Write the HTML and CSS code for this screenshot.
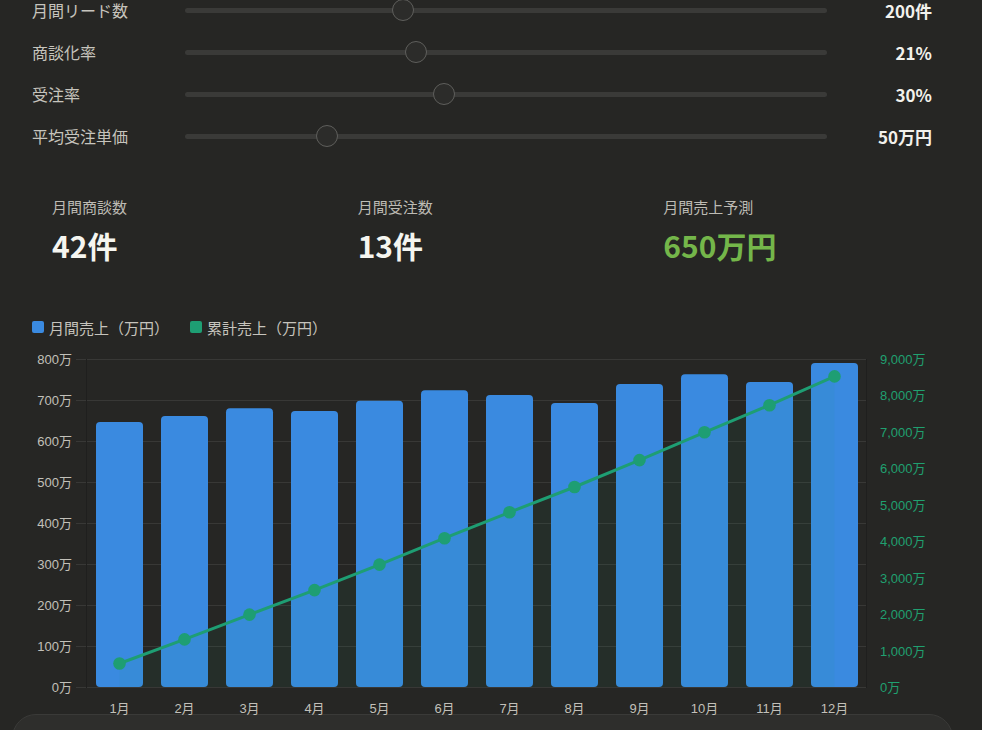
FILE: index.html
```html
<!DOCTYPE html>
<html lang="ja">
<head>
<meta charset="utf-8">
<title>売上シミュレーション</title>
<link rel="stylesheet" href="styles.css">
</head>
<body>
<main class="page">
  <section class="sliders">
    <div class="slider-row">
      <span class="slider-label">月間リード数</span>
      <input class="slider" type="range" min="0" max="600" value="200">
      <span class="slider-value">200件</span>
    </div>
    <div class="slider-row">
      <span class="slider-label">商談化率</span>
      <input class="slider" type="range" min="5" max="50" value="21">
      <span class="slider-value">21%</span>
    </div>
    <div class="slider-row">
      <span class="slider-label">受注率</span>
      <input class="slider" type="range" min="10" max="60" value="30">
      <span class="slider-value">30%</span>
    </div>
    <div class="slider-row">
      <span class="slider-label">平均受注単価</span>
      <input class="slider" type="range" min="10" max="200" value="50">
      <span class="slider-value">50万円</span>
    </div>
  </section>

  <section class="stats">
    <div class="stat">
      <div class="stat-label">月間商談数</div>
      <div class="stat-value">42件</div>
    </div>
    <div class="stat">
      <div class="stat-label">月間受注数</div>
      <div class="stat-value">13件</div>
    </div>
    <div class="stat">
      <div class="stat-label">月間売上予測</div>
      <div class="stat-value stat-value--green">650万円</div>
    </div>
  </section>

  <section class="chart">
    <div class="legend">
      <span class="legend-item"><span class="swatch swatch--blue"></span>月間売上（万円）</span>
      <span class="legend-item"><span class="swatch swatch--green"></span>累計売上（万円）</span>
    </div>
    <svg class="chart-svg" width="901" height="369" viewBox="32 345 901 369" xmlns="http://www.w3.org/2000/svg">
      <g class="grid" stroke="#383836" stroke-width="1">
        <line x1="76" y1="359.5" x2="867" y2="359.5"/>
        <line x1="76" y1="400.5" x2="867" y2="400.5"/>
        <line x1="76" y1="441.5" x2="867" y2="441.5"/>
        <line x1="76" y1="482.5" x2="867" y2="482.5"/>
        <line x1="76" y1="523.5" x2="867" y2="523.5"/>
        <line x1="76" y1="564.5" x2="867" y2="564.5"/>
        <line x1="76" y1="605.5" x2="867" y2="605.5"/>
        <line x1="76" y1="646.5" x2="867" y2="646.5"/>
        <line x1="76" y1="687.5" x2="867" y2="687.5"/>
      </g>
      <line x1="86.5" y1="359" x2="86.5" y2="688" stroke="#1f1f1e" stroke-width="1"/>
      <line x1="866.5" y1="359" x2="866.5" y2="688" stroke="#1f1f1e" stroke-width="1"/>

      <g class="bars" fill="#3a8ae0">
        <rect x="96" y="422.1" width="47" height="264.9" rx="4"/>
        <rect x="161" y="416" width="47" height="271" rx="4"/>
        <rect x="226" y="408.2" width="47" height="278.8" rx="4"/>
        <rect x="291" y="411.1" width="47" height="275.9" rx="4"/>
        <rect x="356" y="400.8" width="47" height="286.2" rx="4"/>
        <rect x="421" y="390.2" width="47" height="296.8" rx="4"/>
        <rect x="486" y="395.1" width="47" height="291.9" rx="4"/>
        <rect x="551" y="402.9" width="47" height="284.1" rx="4"/>
        <rect x="616" y="384" width="47" height="303" rx="4"/>
        <rect x="681" y="374.2" width="47" height="312.8" rx="4"/>
        <rect x="746" y="382" width="47" height="305" rx="4"/>
        <rect x="811" y="363.1" width="47" height="323.9" rx="4"/>
      </g>

      <polygon fill="rgba(30,158,114,0.07)" points="119.5,687 119.5,663.5 184.5,639.4 249.5,614.6 314.5,590.1 379.5,564.6 444.5,538.2 509.5,512.3 574.5,487 639.5,460.1 704.5,432.3 769.5,405.2 834.5,376.4 834.5,687"/>
      <polyline fill="none" stroke="#1e9e73" stroke-width="3" stroke-linejoin="round" points="119.5,663.5 184.5,639.4 249.5,614.6 314.5,590.1 379.5,564.6 444.5,538.2 509.5,512.3 574.5,487 639.5,460.1 704.5,432.3 769.5,405.2 834.5,376.4"/>
      <g fill="#1e9e73">
        <circle cx="119.5" cy="663.5" r="6.3"/>
        <circle cx="184.5" cy="639.4" r="6.3"/>
        <circle cx="249.5" cy="614.6" r="6.3"/>
        <circle cx="314.5" cy="590.1" r="6.3"/>
        <circle cx="379.5" cy="564.6" r="6.3"/>
        <circle cx="444.5" cy="538.2" r="6.3"/>
        <circle cx="509.5" cy="512.3" r="6.3"/>
        <circle cx="574.5" cy="487" r="6.3"/>
        <circle cx="639.5" cy="460.1" r="6.3"/>
        <circle cx="704.5" cy="432.3" r="6.3"/>
        <circle cx="769.5" cy="405.2" r="6.3"/>
        <circle cx="834.5" cy="376.4" r="6.3"/>
      </g>

      <g class="axis-left" text-anchor="end">
        <text x="72" y="364">800万</text>
        <text x="72" y="405">700万</text>
        <text x="72" y="446">600万</text>
        <text x="72" y="487">500万</text>
        <text x="72" y="528">400万</text>
        <text x="72" y="569">300万</text>
        <text x="72" y="610">200万</text>
        <text x="72" y="651">100万</text>
        <text x="72" y="692">0万</text>
      </g>
      <g class="axis-right" text-anchor="start">
        <text x="880" y="364">9,000万</text>
        <text x="880" y="400.4">8,000万</text>
        <text x="880" y="436.9">7,000万</text>
        <text x="880" y="473.3">6,000万</text>
        <text x="880" y="509.8">5,000万</text>
        <text x="880" y="546.2">4,000万</text>
        <text x="880" y="582.7">3,000万</text>
        <text x="880" y="619.1">2,000万</text>
        <text x="880" y="655.6">1,000万</text>
        <text x="880" y="692">0万</text>
      </g>
      <g class="axis-bottom" text-anchor="middle">
        <text x="119.5" y="712.5">1月</text>
        <text x="184.5" y="712.5">2月</text>
        <text x="249.5" y="712.5">3月</text>
        <text x="314.5" y="712.5">4月</text>
        <text x="379.5" y="712.5">5月</text>
        <text x="444.5" y="712.5">6月</text>
        <text x="509.5" y="712.5">7月</text>
        <text x="574.5" y="712.5">8月</text>
        <text x="639.5" y="712.5">9月</text>
        <text x="704.5" y="712.5">10月</text>
        <text x="769.5" y="712.5">11月</text>
        <text x="834.5" y="712.5">12月</text>
      </g>
    </svg>
  </section>
</main>
<section class="bottom-card"></section>
</body>
</html>
```
FILE: styles.css
```css
* { box-sizing: border-box; }

html, body {
  margin: 0;
  padding: 0;
  background: #262624;
  overflow: hidden;
}

body {
  font-family: "Noto Sans CJK JP", "Noto Sans", sans-serif;
  color: #c6c4bd;
  height: 730px;
}

.page {
  margin-left: 12px;
  width: 941px;
  padding: 0 20px;
}

.sliders {
  margin-top: -11px;
}

.slider-row {
  display: grid;
  grid-template-columns: 153px 1fr 106px;
  align-items: center;
  height: 42px;
}

.slider-label {
  font-size: 16px;
  color: #c6c4bd;
  line-height: 20px;
  padding-top: 0;
}

.slider-value {
  font-size: 17px;
  font-weight: 700;
  color: #f2f1ec;
  text-align: right;
  padding-right: 1px;
  line-height: 20px;
  padding-top: 2px;
}

.slider {
  -webkit-appearance: none;
  appearance: none;
  width: 100%;
  height: 22px;
  margin: 0;
  background: transparent;
  display: block;
}

.slider::-webkit-slider-runnable-track {
  height: 5px;
  background: #3a3a38;
  border-radius: 3px;
}

.slider::-webkit-slider-thumb {
  -webkit-appearance: none;
  appearance: none;
  width: 22px;
  height: 22px;
  border-radius: 50%;
  background: #2c2c2a;
  border: 1.5px solid #5f5f5c;
  margin-top: -8.5px;
}

.stats {
  display: grid;
  grid-template-columns: repeat(3, 1fr);
  column-gap: 16px;
  margin-top: 40px;
}

.stat {
  padding-left: 20px;
}

.stat-label {
  font-size: 15px;
  line-height: 20px;
  color: #bdbbb4;
}

.stat-value {
  font-size: 30px;
  font-weight: 700;
  line-height: 40px;
  margin-top: 8px;
  color: #f5f5f0;
}

.stat-value--green {
  color: #74b64a;
}

.chart {
  margin-top: 52px;
}

.legend {
  display: flex;
  gap: 21px;
  height: 20px;
  align-items: center;
  font-size: 15px;
  color: #c6c4bd;
}

.legend-item {
  display: flex;
  align-items: center;
  gap: 5px;
}

.swatch {
  width: 12px;
  height: 12px;
  border-radius: 2px;
  display: inline-block;
}

.swatch--blue { background: #3a8ae0; }
.swatch--green { background: #1e9e73; }

.chart-svg {
  display: block;
  margin-top: 8px;
  overflow: visible;
}

.chart-svg text {
  font-family: "Liberation Sans", "Noto Sans CJK JP", sans-serif;
  font-size: 13px;
}

.axis-left text, .axis-bottom text { fill: #c2c0b9; }
.axis-right text { fill: #20a070; }

.bottom-card {
  margin: 0 29px 0 12px;
  height: 120px;
  background: #2e2e2c;
  border: 1px solid #3a3a38;
  border-radius: 24px;
}
```
